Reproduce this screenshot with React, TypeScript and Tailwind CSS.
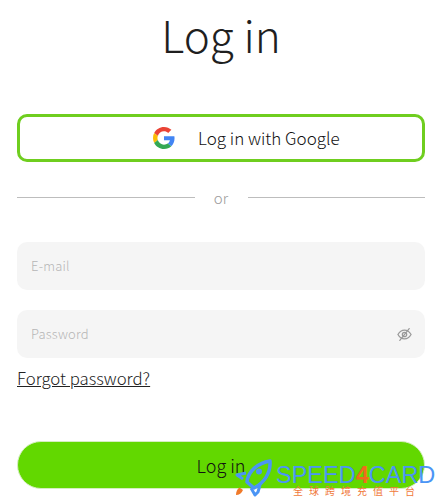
export default function App() {
  const font = { fontFamily: '"Noto Sans CJK SC", sans-serif' };
  return (
    <div className="relative h-[501px] w-[440px] overflow-hidden bg-white pr-[15px] pl-[17px] text-[#1f1f1f]" style={font}>
      <h1 className="mt-[2px] h-[70px] text-center text-[44px] leading-[64px] font-light">Log in</h1>
      <button className="mt-[42px] flex h-[48px] w-full items-center rounded-[10px] border-[3px] border-[#6fce1f] bg-white pl-[133px]">
        <svg width="22" height="22" viewBox="0 0 48 48">
          <path fill="#EA4335" d="M24 9.500c3.500 0 6.700 1.200 9.200 3.600l6.900-6.900C35.900 2.400 30.500 0 24 0 14.600 0 6.500 5.400 2.600 13.200l8 6.200C12.400 13.700 17.700 9.500 24 9.500z" />
          <path fill="#4285F4" d="M47 24.500c0-1.600-.1-3.100-.4-4.500H24v9h12.900c-.6 3-2.200 5.500-4.800 7.200l7.700 6c4.500-4.200 7.200-10.300 7.200-17.700z" />
          <path fill="#FBBC05" d="M10.500 28.600c-.5-1.400-.8-3-.8-4.600s.3-3.200.8-4.600l-8-6.200C.9 16.500 0 20.100 0 24s.9 7.500 2.600 10.800l7.900-6.200z" />
          <path fill="#34A853" d="M24 48c6.500 0 11.900-2.100 15.900-5.800l-7.700-6c-2.100 1.400-4.900 2.300-8.200 2.300-6.300 0-11.600-4.200-13.500-9.900l-8 6.200C6.500 42.600 14.600 48 24 48z" />
        </svg>
        <span className="ml-[23px] text-[17px] font-light text-[#111]">Log in with Google</span>
      </button>
      <div className="mt-[24px] flex h-[22px] items-center">
        <div className="h-px flex-1 bg-[#bdbdbd]" />
        <span className="w-[53px] pt-[2px] text-center text-[15px] font-light text-[#9a9a9a]">or</span>
        <div className="h-px flex-1 bg-[#bdbdbd]" />
      </div>
      <div className="mt-[34px] flex h-[48px] items-center rounded-[10px] bg-[#f5f5f5] px-[14px] text-[13px] font-light tracking-[0.2px] text-[#b5b5b5]">E-mail</div>
      <div className="mt-[20px] flex h-[48px] items-center justify-between rounded-[10px] bg-[#f5f5f5] pr-[13px] pl-[14px] text-[13px] font-light tracking-[0.2px] text-[#b5b5b5]">
        <span>Password</span>
        <svg width="15" height="15" viewBox="0 0 24 24" fill="none" stroke="#999999" strokeWidth="2" strokeLinecap="round">
          <path d="M1.500 12S5.500 5 12 5s10.500 7 10.500 7-4 7-10.500 7S1.500 12 1.500 12z" />
          <circle cx="12" cy="12" r="3.500" />
          <path d="M19.500 2.500 4.500 21.500" />
        </svg>
      </div>
      <div className="mt-[7px] h-[26px] text-[16.750px] leading-[26px] font-light text-[#222] underline">Forgot password?</div>
      <button className="mt-[50px] flex h-[48px] w-full items-center justify-center rounded-full border border-[#d5eec0] bg-[#62d800] text-[18px] font-light text-[#111]">Log in</button>
      <div className="absolute top-[459px] left-[235px] h-[38px] w-[205px]">
        <svg className="absolute top-0 left-0" width="44" height="38" viewBox="0 0 44 38" fill="none">
          <path d="M1 36c0-3 1-6 3.500-7.500L8 31c-1 3-4 5-7 5z" fill="#f07a2a" />
          <path d="M12 23 C13 12 23 4 35 2 C36 14 29 24 19 29 Z" stroke="#4b95f5" strokeWidth="3.500" strokeLinejoin="round" />
          <path d="M11 14 L2 16 L8 20" stroke="#4b95f5" strokeWidth="3" strokeLinejoin="round" />
          <path d="M25 26 L23 33 L20 36 L16 29" stroke="#4b95f5" strokeWidth="3" strokeLinejoin="round" />
          <circle cx="24" cy="12.500" r="3" fill="#4b95f5" />
        </svg>
        <div className="absolute top-[7px] left-[41px] text-[23.500px] leading-[18px] font-normal whitespace-nowrap text-[#4b95f5]" style={{ fontFamily: '"Liberation Sans", sans-serif' }}>
          SPEED<span className="font-bold text-[#f06a1c]">4</span>CARD
        </div>
        <div className="absolute top-[27px] left-[58px] text-[10px] leading-[10px] tracking-[6px] whitespace-nowrap text-[#f0783a]">全球跨境充值平台</div>
      </div>
    </div>
  );
}
